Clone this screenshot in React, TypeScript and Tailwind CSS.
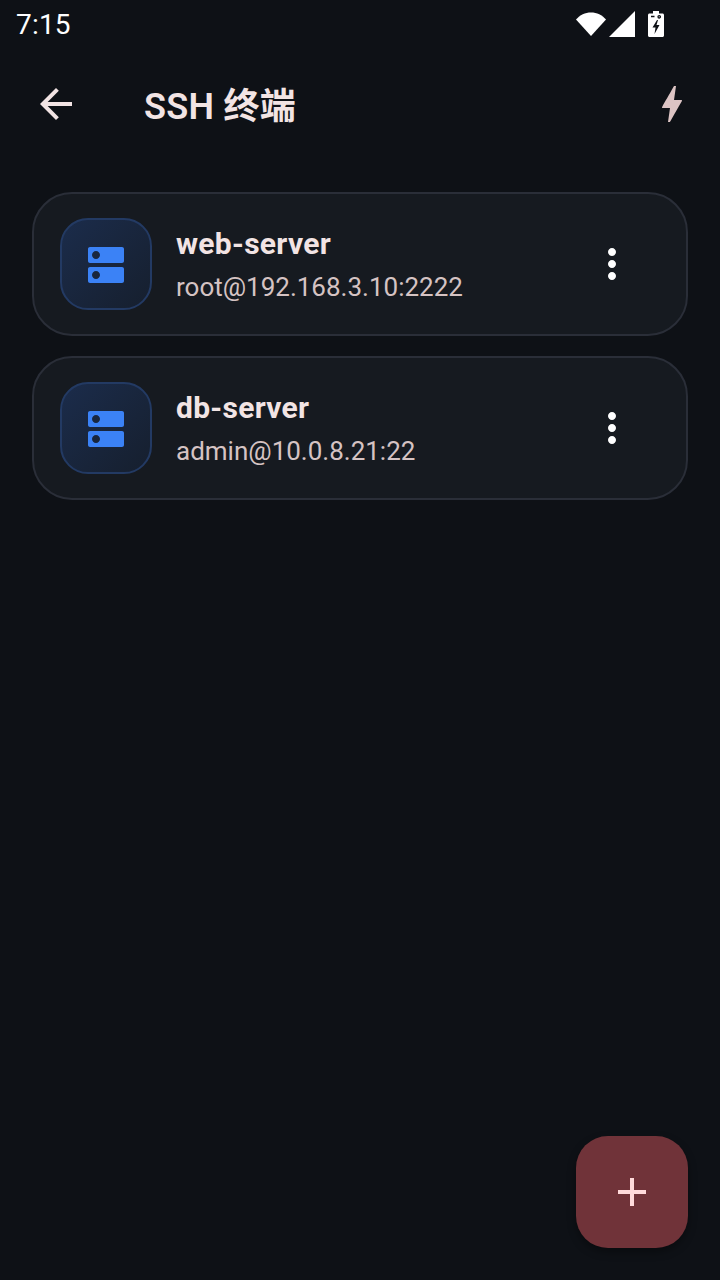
import React from "react";

// Material-style glyph wrapper on a 24-unit grid
function Glyph({ d, className }: { d: string; className: string }) {
  return (
    <svg viewBox="0 0 24 24" className={className} fill="currentColor">
      <path d={d} />
    </svg>
  );
}

const ICONS = {
  back: "M20 11H7.83l5.59-5.59L12 4l-8 8 8 8 1.41-1.41L7.83 13H20v-2z",
  bolt: "M11 21h-1l1-7H7.5c-.58 0-.57-.32-.38-.66.19-.34.05-.08.07-.12C8.48 10.94 10.42 7.54 13 3h1l-1 7h3.5c.49 0 .56.33.47.51l-.07.15C12.96 17.55 11 21 11 21z",
  dns: "M20 13H4c-.55 0-1 .45-1 1v6c0 .55.45 1 1 1h16c.55 0 1-.45 1-1v-6c0-.55-.45-1-1-1zM7 19c-1.1 0-2-.9-2-2s.9-2 2-2 2 .9 2 2-.9 2-2 2zM20 3H4c-.55 0-1 .45-1 1v6c0 .55.45 1 1 1h16c.55 0 1-.45 1-1V4c0-.55-.45-1-1-1zM7 9c-1.1 0-2-.9-2-2s.9-2 2-2 2 .9 2 2-.9 2-2 2z",
  more: "M12 8c1.1 0 2-.9 2-2s-.9-2-2-2-2 .9-2 2 .9 2 2 2zm0 2c-1.1 0-2 .9-2 2s.9 2 2 2 2-.9 2-2-.9-2-2-2zm0 6c-1.1 0-2 .9-2 2s.9 2 2 2 2-.9 2-2-.9-2-2-2z",
  add: "M19 13h-6v6h-2v-6H5v-2h6V5h2v6h6v2z",
};

function StatusBar() {
  return (
    <div className="flex h-[48px] items-center justify-between pl-[16px] pr-[56px] text-white">
      <span className="pt-[2px] text-[28px] leading-none tracking-[0.2px]">7:15</span>
      <div className="flex items-center">
        {/* wifi */}
        <svg viewBox="0 0 30 24" className="h-[24px] w-[30px]" fill="white">
          <path d="M0 7.5C4 3 9 .5 15 .5s11 2.5 15 7L15 24z" />
        </svg>
        {/* signal */}
        <svg viewBox="0 0 26 26" className="ml-[3px] h-[26px] w-[26px]" fill="white">
          <path d="M26 0v26H0z" />
        </svg>
        {/* charging battery */}
        <svg viewBox="0 0 16 26" className="ml-[13px] h-[26px] w-[16px]">
          <path
            fill="white"
            d="M5 0h6v2.5h3.5c.8 0 1.5.7 1.5 1.5v20.500c0 .8-.7 1.500-1.500 1.500h-13C.7 26 0 25.300 0 24.500V4c0-.8.7-1.500 1.500-1.500H5z"
          />
          <path fill="#0e1116" d="M9 9 4.500 16.500H7.500L6.500 23 11.500 14H8.500L10 9z" />
          <path fill="none" stroke="#0e1116" strokeWidth="1.300" d="M3 5.500h3.500M10 5.800a1.200 1.200 0 1 0 2.400 0a1.200 1.200 0 1 0-2.400 0" />
        </svg>
      </div>
    </div>
  );
}

function Header() {
  return (
    <div className="mt-[8px] flex h-[96px] items-center pl-[32px] pr-[24px]">
      <Glyph d={ICONS.back} className="h-[48px] w-[48px] text-[#f2e4e4]" />
      <h1 className="ml-[64px] flex-1 pt-[5px] text-[36px] font-semibold leading-none tracking-[0.25px] text-[#f2e4e4]">
        SSH 终端
      </h1>
      <Glyph d={ICONS.bolt} className="h-[48px] w-[48px] text-[#dcc4c4]" />
    </div>
  );
}

function HostCard({ name, address }: { name: string; address: string }) {
  return (
    <div className="flex h-[144px] items-center rounded-[40px] border-2 border-[#2a2e38] bg-[#161a20] pl-[26px] pr-[50px]">
      <div className="flex h-[92px] w-[92px] items-center justify-center rounded-[28px] border-2 border-[#233a63] bg-gradient-to-br from-[#1b2c4b] to-[#161f2e] pt-[1px]">
        <Glyph d={ICONS.dns} className="h-[48px] w-[48px] text-[#3b82f6]" />
      </div>
      <div className="ml-[24px] flex-1">
        <div className="pt-[1px] text-[30px] font-bold leading-[36px] tracking-[0.3px] text-[#f2e4e4]">{name}</div>
        <div className="mt-[8px] text-[26px] leading-[34px] text-[#d5c3c3]">{address}</div>
      </div>
      <Glyph d={ICONS.more} className="h-[48px] w-[48px] text-white" />
    </div>
  );
}

export default function App() {
  return (
    <div
      className="relative h-[1280px] w-[720px] overflow-hidden bg-[#0e1116]"
      style={{ fontFamily: 'Roboto, "Noto Sans CJK SC", sans-serif' }}
    >
      <StatusBar />
      <Header />
      <div className="mt-[40px] flex flex-col gap-[20px] px-[32px]">
        <HostCard name="web-server" address="root@192.168.3.10:2222" />
        <HostCard name="db-server" address="admin@10.0.8.21:22" />
      </div>
      <button className="absolute left-[576px] top-[1136px] flex h-[112px] w-[112px] items-center justify-center rounded-[32px] bg-[#703339] text-[#ffdadb] shadow-[0_4px_8px_rgba(0,0,0,0.35)]">
        <Glyph d={ICONS.add} className="h-[48px] w-[48px]" />
      </button>
    </div>
  );
}
